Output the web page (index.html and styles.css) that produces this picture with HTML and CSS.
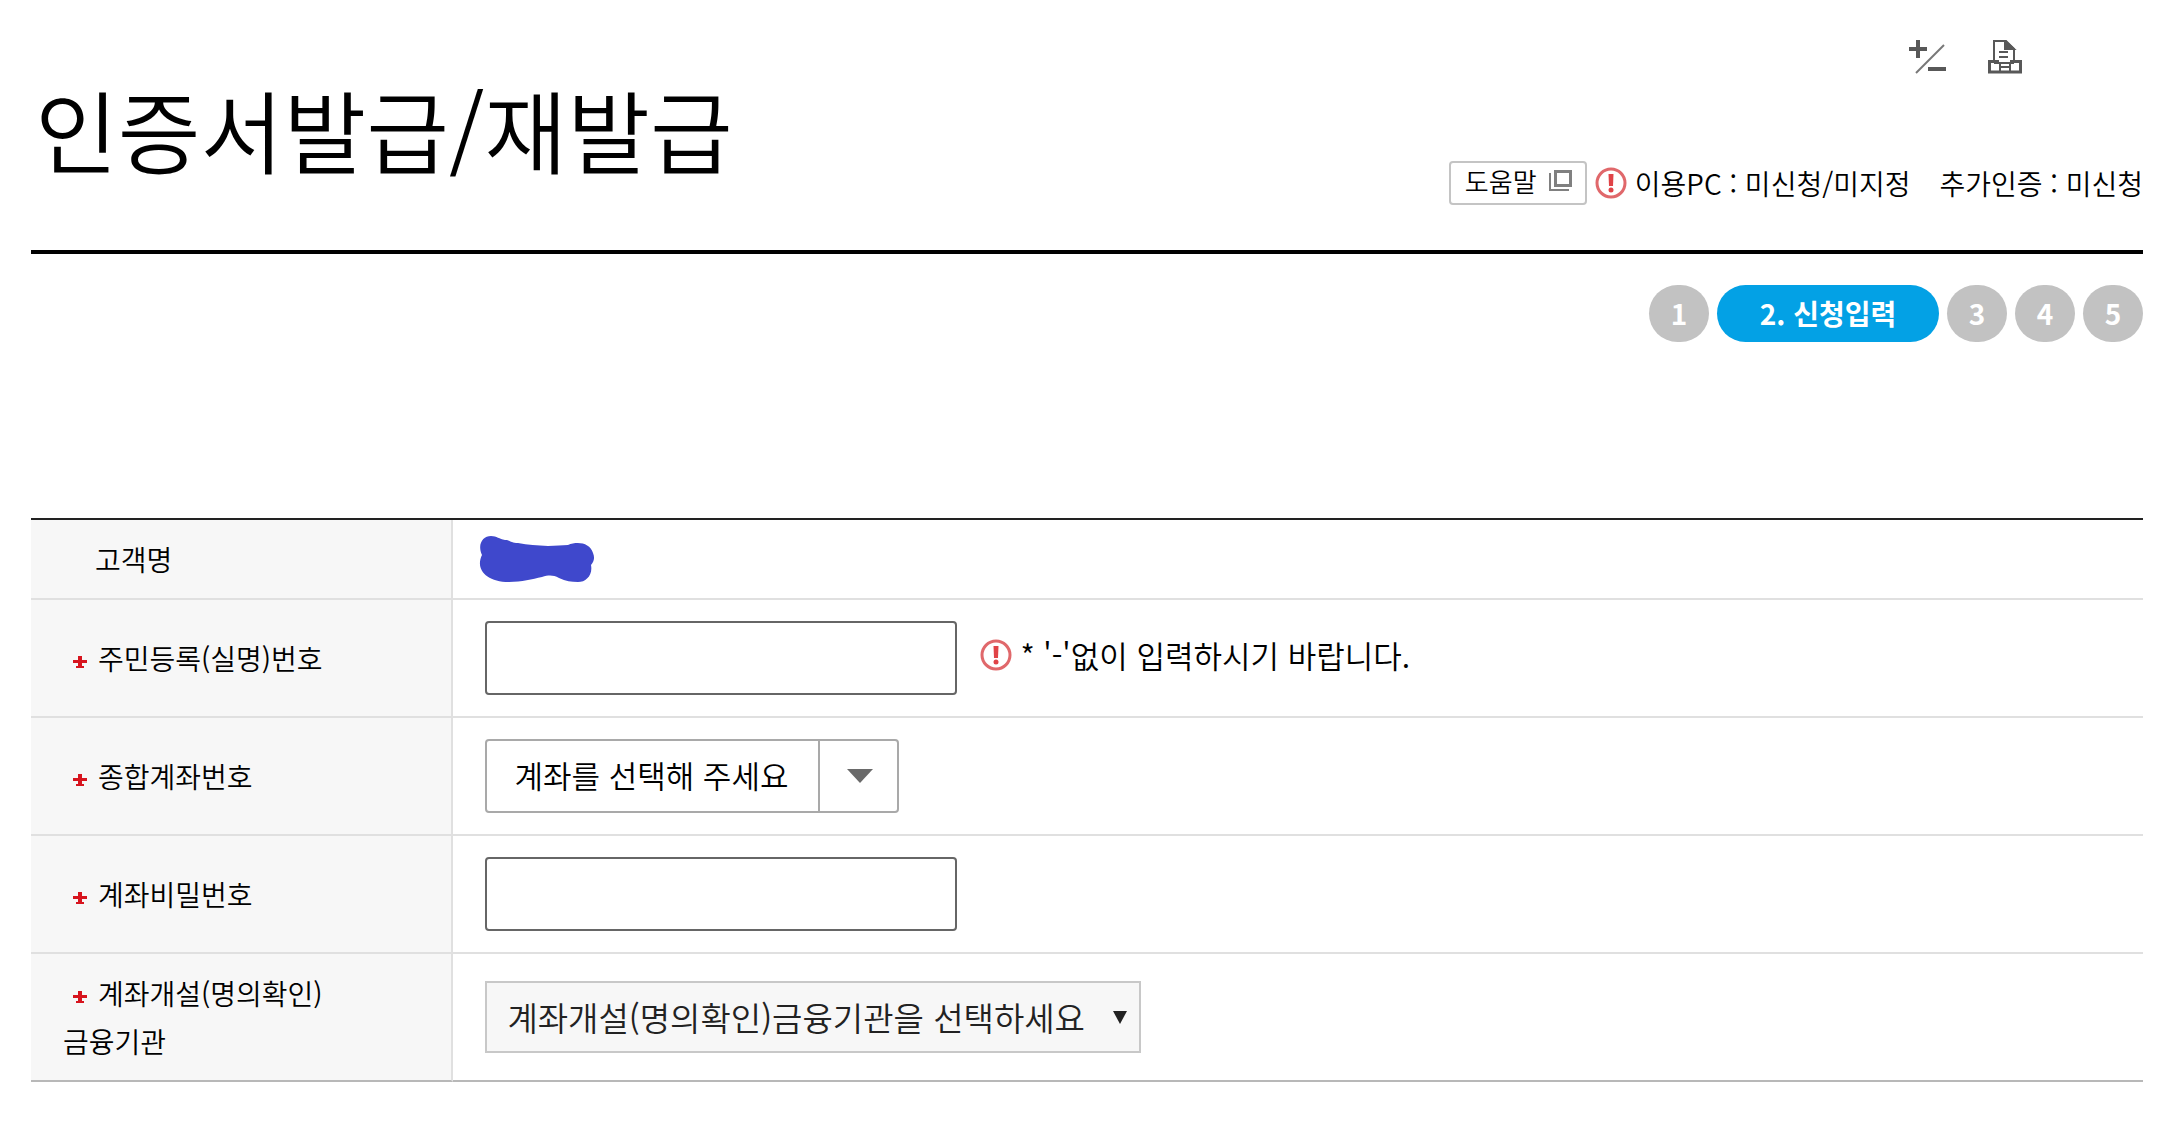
FILE: index.html
```html
<!DOCTYPE html>
<html lang="ko">
<head>
<meta charset="utf-8">
<meta name="viewport" content="width=device-width, initial-scale=1">
<title>인증서발급/재발급</title>
<link rel="stylesheet" href="styles.css">
</head>
<body>
<svg class="defs" aria-hidden="true">
  <symbol id="alert" viewBox="0 0 32 32">
    <circle cx="16" cy="16" r="14" fill="#fff" stroke="#e0686b" stroke-width="3"/>
    <path d="M13.500 7h5l-.5 12h-4z" fill="#e04347"/>
    <circle cx="16" cy="23" r="2.500" fill="#e04347"/>
  </symbol>
  <symbol id="required" viewBox="0 0 14 12">
    <path d="M5 0h4v4h5v3H9v3h2v2H3v-2h2V7H0V4h5z" fill="#d7141e"/>
  </symbol>
</svg>
<header class="page-header">
  <h1 class="title">인증서발급/재발급</h1>
  <div class="header-side">
    <div class="tools">
      <button class="tool" type="button" aria-label="확대/축소">
        <svg width="38" height="34" viewBox="0 0 38 34"><path d="M0 9h18M9 0v18M19 29h18" fill="none" stroke="#585858" stroke-width="4"/><path d="M7 33 35 5" stroke="#777" stroke-width="2"/></svg>
      </button>
      <button class="tool" type="button" aria-label="인쇄">
        <svg width="34" height="34" viewBox="0 0 34 34" fill="none" stroke="#585858" stroke-width="2"><path d="M6 22V1h12l8 8v13"/><path d="M17 1v8h9z" fill="#585858"/><path d="M11 12h9M11 17h9"/><path d="M11 21.500H1.500v10.500h31V21.500H22" stroke-width="3"/><path d="M6 23h20M12 22v10M22 22v10M12 27h10"/></svg>
      </button>
    </div>
    <div class="status">
      <button class="help" type="button">도움말
        <svg width="24" height="22" viewBox="0 0 24 22" fill="none" stroke="#808080"><path d="M6.500 1.500h15v14h-15z" stroke-width="3"/><path d="M1 3v17h19" stroke-width="2"/></svg>
      </button>
      <svg class="alert" aria-hidden="true"><use href="#alert"/></svg>
      <span class="status-text">이용PC : 미신청/미지정</span>
      <span class="status-text">추가인증 : 미신청</span>
    </div>
  </div>
</header>
<main>
  <ol class="steps">
    <li class="step">1</li>
    <li class="step step-current" aria-current="step">2. 신청입력</li>
    <li class="step">3</li>
    <li class="step">4</li>
    <li class="step">5</li>
  </ol>
  <form>
    <table class="form-table">
      <tr class="row-name">
        <th scope="row"><span class="plain">고객명</span></th>
        <td><svg class="masked" width="116" height="48" viewBox="0 0 116 48" aria-hidden="true"><path d="M3 20C-2 9 4 1 12 1c6 0 8 3 14 4 5 0 6 3 13 3 10 2 19 2 30 3 8 0 14-1 20-1 10-4 22-2 25 8 2 5 1 8-2 12 2 10-5 17-13 17-7 0-12-1-19-4-6-3-10-3-17-1-10 2-20 5-33 5C7 47-4 34 3 20z" fill="#3f48cc"/></svg></td>
      </tr>
      <tr>
        <th scope="row"><svg class="required" aria-hidden="true"><use href="#required"/></svg><label for="rrn">주민등록(실명)번호</label></th>
        <td><div class="field"><input class="text-input" id="rrn" type="text"><div class="hint"><svg class="alert" aria-hidden="true"><use href="#alert"/></svg><span class="note">* '-'없이 입력하시기 바랍니다.</span></div></div></td>
      </tr>
      <tr>
        <th scope="row"><svg class="required" aria-hidden="true"><use href="#required"/></svg><label for="account">종합계좌번호</label></th>
        <td><div class="picker">
          <select class="account" id="account"><option>계좌를 선택해 주세요</option></select>
          <span class="picker-arrow"><svg width="26" height="14" viewBox="0 0 26 14"><path d="M0 0h26L13 14z" fill="#6a6a6a"/></svg></span>
        </div></td>
      </tr>
      <tr>
        <th scope="row"><svg class="required" aria-hidden="true"><use href="#required"/></svg><label for="pin">계좌비밀번호</label></th>
        <td><input class="text-input" id="pin" type="password"></td>
      </tr>
      <tr class="row-bank">
        <th scope="row"><svg class="required" aria-hidden="true"><use href="#required"/></svg><label for="bank">계좌개설(명의확인)<br>금융기관</label></th>
        <td><div class="picker">
          <select class="bank" id="bank"><option>계좌개설(명의확인)금융기관을 선택하세요</option></select>
          <span class="bank-arrow"><svg width="14" height="13" viewBox="0 0 14 13"><path d="M0 0h14L7 13z" fill="#222"/></svg></span>
        </div></td>
      </tr>
    </table>
  </form>
</main>
</body>
</html>
```
FILE: styles.css
```css
* { box-sizing: border-box; }

body {
  margin: 0;
  padding: 40px 25px 46px 31px;
  background: #fff;
  color: #000;
  font-family: "Noto Sans CJK KR", sans-serif;
  font-size: 28px;
  font-weight: 350;
  line-height: 48px;
}

button, input, select { font: inherit; color: inherit; }
svg { display: block; flex: none; }
.defs { position: absolute; width: 0; height: 0; }

.page-header {
  display: flex;
  justify-content: space-between;
  height: 214px;
  border-bottom: 4px solid #000;
}

.title {
  margin: 24px 0 0 4px;
  font-size: 90px;
  font-weight: 350;
  line-height: 128px;
  white-space: nowrap;
}

.header-side {
  display: flex;
  flex-direction: column;
  align-items: flex-end;
  gap: 85px;
}

.tools { display: flex; gap: 41px; margin-right: 121px; }
.tool { padding: 0; border: 0; background: none; cursor: pointer; }

.status { display: flex; align-items: center; height: 48px; white-space: nowrap; }

.help {
  display: flex;
  align-items: center;
  justify-content: space-between;
  width: 138px;
  height: 44px;
  padding: 0 12px 4px 14px;
  border: 2px solid #c4c4c4;
  border-radius: 4px;
  background: #fff;
  font-size: 26px;
}

.alert { width: 32px; height: 32px; }
.status .alert { margin: 0 8px; }
.status-text + .status-text { margin-left: 29px; }

.steps {
  display: flex;
  justify-content: flex-end;
  gap: 8px;
  margin: 31px 0 176px;
  padding: 0;
  list-style: none;
}

.step {
  width: 60px;
  height: 57px;
  border-radius: 30px;
  background: #c2c2c2;
  color: #fff;
  font-weight: 700;
  line-height: 56px;
  text-align: center;
}

.step-current { width: 222px; background: #03a1e5; }

.form-table {
  width: 100%;
  border-spacing: 0;
  border-top: 2px solid #222;
}

tr { height: 118px; }
.row-name { height: 80px; }
.row-bank { height: 128px; }

th, td {
  padding: 0 0 0 32px;
  border-bottom: 2px solid #e0e0e0;
}

th {
  width: 20%;
  border-right: 2px solid #e0e0e0;
  background: #f7f7f7;
  font-weight: 350;
  text-align: left;
}

.row-bank > * { border-bottom-color: #b8b8b8; }

.plain { padding-left: 32px; }
.required { display: inline-block; width: 14px; height: 12px; margin: 0 11px 0 10px; vertical-align: 2px; }
.masked { margin-left: -6px; }

.field { display: flex; align-items: center; }
.hint { display: flex; align-items: center; padding-bottom: 6px; }
.hint .alert { margin: 0 8px 0 23px; }
.note { font-size: 31px; }

.text-input {
  display: block;
  width: 472px;
  height: 74px;
  padding: 0 20px;
  border: 2px solid #666;
  border-radius: 4px;
  background: #fff;
}

.picker { display: inline-grid; vertical-align: middle; }
.picker > * { grid-area: 1 / 1; }

select { appearance: none; margin: 0; cursor: pointer; }

.account {
  width: 414px;
  height: 74px;
  padding: 0 80px 2px 27px;
  border: 2px solid #a9a9a9;
  border-radius: 4px;
  background: #fff;
  font-size: 31px;
}

.picker-arrow {
  display: flex;
  align-items: center;
  justify-content: center;
  justify-self: end;
  width: 81px;
  border-left: 2px solid #a9a9a9;
  pointer-events: none;
}

.bank {
  width: 656px;
  height: 72px;
  padding: 0 48px 0 20px;
  border: 2px solid #c8c8c8;
  border-radius: 0;
  background: #f7f7f7;
  color: #222;
  font-size: 33px;
}

.bank-arrow {
  display: flex;
  align-items: center;
  justify-self: end;
  padding-right: 14px;
  pointer-events: none;
}
```
